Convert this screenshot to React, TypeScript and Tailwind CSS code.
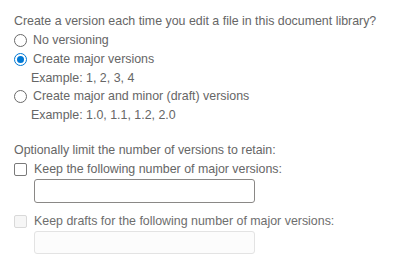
import type { FC } from 'react';

const Radio: FC<{ checked?: boolean }> = ({ checked }) =>
  checked ? (
    <span className="flex h-[13px] w-[13px] shrink-0 items-center justify-center rounded-full border-[1.5px] border-[#0078d4] bg-white">
      <span className="h-[7px] w-[7px] rounded-full bg-[#0078d4]" />
    </span>
  ) : (
    <span className="h-[13px] w-[13px] shrink-0 rounded-full border border-[#6a6a6a] bg-white" />
  );

const Check: FC<{ disabled?: boolean }> = ({ disabled }) => (
  <span
    className={
      disabled
        ? 'h-[13px] w-[13px] shrink-0 rounded-[2px] border border-[#d9d9d9] bg-[#f6f6f6]'
        : 'h-[13px] w-[13px] shrink-0 rounded-[2px] border border-[#7a7a7a] bg-white'
    }
  />
);

const App: FC = () => {
  return (
    <div className="h-[272px] w-[403px] bg-white pl-[14px] pt-[12px] text-[12.4px] text-[#666666] [font-family:'Liberation_Sans',Arial,sans-serif]">
      <div className="flex h-[19px] items-center">
        Create a version each time you edit a file in this document library?
      </div>
      <div className="flex h-[19px] items-center gap-[6px]">
        <Radio />
        <span>No versioning</span>
      </div>
      <div className="flex h-[19px] items-center gap-[6px]">
        <Radio checked />
        <span>Create major versions</span>
      </div>
      <div className="flex h-[18px] items-center pl-[17px]">Example: 1, 2, 3, 4</div>
      <div className="flex h-[19px] items-center gap-[6px]">
        <Radio />
        <span>Create major and minor (draft) versions</span>
      </div>
      <div className="flex h-[18px] items-center pl-[17px]">Example: 1.0, 1.1, 1.2, 2.0</div>

      <div className="mt-[17px] flex h-[18px] items-center">
        Optionally limit the number of versions to retain:
      </div>
      <div className="flex h-[20px] items-center gap-[7px]">
        <Check />
        <span>Keep the following number of major versions:</span>
      </div>
      <input
        type="text"
        className="ml-[20px] block h-[24px] w-[221px] rounded-[3px] border border-[#8a8886] bg-white px-2 outline-none"
      />

      <div className="mt-[9px] flex h-[19px] items-center gap-[7px] text-[#6e6e6e]">
        <Check disabled />
        <span>Keep drafts for the following number of major versions:</span>
      </div>
      <input
        type="text"
        disabled
        className="ml-[20px] block h-[23px] w-[221px] rounded-[3px] border border-[#e3e3e3] bg-[#fcfcfc] px-2 outline-none"
      />
    </div>
  );
};

export default App;
